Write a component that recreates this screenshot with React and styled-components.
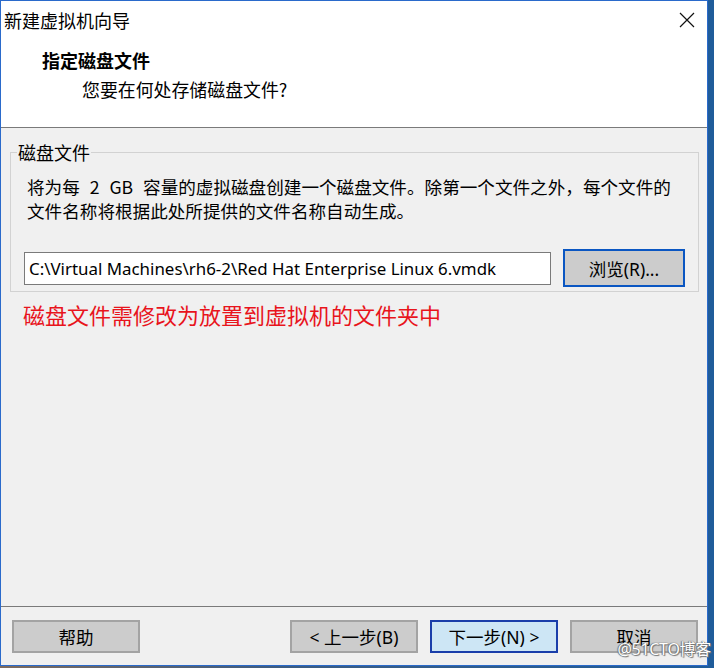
import styled, { createGlobalStyle } from 'styled-components';

const GlobalStyle = createGlobalStyle`
  html, body {
    margin: 0;
    padding: 0;
    background: #4d6584;
  }
  * {
    box-sizing: border-box;
  }
`;

const FONT = `"Noto Sans", "Noto Sans CJK SC", sans-serif`;
const CJK = `"Noto Sans CJK SC", "Noto Sans", sans-serif`;

const Page = styled.div`
  width: 714px;
  height: 668px;
  position: relative;
  background: linear-gradient(90deg, #7d6a5c 0%, #3c5c82 40%, #1f5c9a 100%);
  overflow: hidden;
`;

const Window = styled.div`
  width: 708px;
  height: 666px;
  border: 1px solid #2a6acb;
  background: #f0f0f0;
  display: flex;
  flex-direction: column;
  font-family: ${CJK};
  color: #000;
`;

const TitleBar = styled.div`
  height: 37px;
  background: #fff;
  display: flex;
  align-items: center;
  justify-content: space-between;
  padding: 0 12px 0 3px;
`;

const Title = styled.span`
  font-size: 18px;
  line-height: 24px;
`;

const Close = styled.svg`
  width: 16px;
  height: 16px;
  margin-top: 1px;
`;

const Header = styled.div`
  height: 90px;
  background: #fff;
  border-bottom: 1px solid #7a7a7a;
  padding-top: 10px;
`;

const Heading = styled.div`
  font-size: 18px;
  line-height: 24px;
  font-weight: 700;
  margin-left: 41px;
`;

const Subtitle = styled.div`
  font-size: 17.9px;
  line-height: 24px;
  margin: 5px 0 0 81px;
`;

const Body = styled.div`
  flex: 1;
  padding: 12px 8px 0 9px;
  position: relative;
`;

const Group = styled.fieldset`
  margin: 0;
  border: 1px solid #d2d2d2;
  padding: 4px 12px 4px 13px;
  min-width: 0;
`;

const Legend = styled.legend`
  font-size: 18px;
  line-height: 24px;
  padding: 0 1px;
  margin-left: -7px;
`;

const Description = styled.p`
  margin: 7px 0 0 3px;
  font-size: 17.6px;
  line-height: 24px;
  word-spacing: 6px;
`;

const PathRow = styled.div`
  display: flex;
  align-items: center;
  gap: 12px;
  margin-top: 26px;
`;

const PathInput = styled.div`
  flex: 0 0 527px;
  height: 33px;
  background: #fff;
  border: 1px solid #7a7a7a;
  display: flex;
  align-items: center;
  padding-left: 4px;
  font-family: ${FONT};
  font-size: 16.9px;
  white-space: nowrap;
  overflow: hidden;
`;

const Button = styled.button`
  width: ${(p) => p.$w || 128}px;
  height: ${(p) => p.$h || 33}px;
  background: ${(p) => (p.$primary ? '#cde6f5' : '#cccccc')};
  border: 2px solid ${(p) => (p.$focus ? '#0a56c2' : p.$primary ? '#1a3eaa' : '#a3a3a3')};
  font-family: ${FONT};
  font-size: 17.5px;
  color: #000;
  padding: 0;
  display: flex;
  align-items: center;
  justify-content: center;
`;

const Note = styled.div`
  margin: 8px 0 0 13px;
  color: #e8141c;
  font-size: 22px;
  line-height: 28px;
`;

const Footer = styled.div`
  height: 59px;
  border-top: 1px solid #7a7a7a;
  display: flex;
  align-items: flex-start;
  padding: 13px 9px 0 11px;
  gap: 12px;
`;

const Spacer = styled.div`
  flex: 1;
`;

const Watermark = styled.div`
  position: absolute;
  right: 3px;
  bottom: 8px;
  font-family: ${FONT};
  font-size: 16px;
  color: #fff;
  text-shadow: 0 0 1px #555, 1px 1px 1px #777, -1px 0 1px #777;
  letter-spacing: -0.3px;
`;

export default function App() {
  return (
    <Page>
      <GlobalStyle />
      <Window>
        <TitleBar>
          <Title>新建虚拟机向导</Title>
          <Close viewBox="0 0 16 16">
            <path d="M1 1 L15 15 M15 1 L1 15" stroke="#111" strokeWidth="1.2" fill="none" />
          </Close>
        </TitleBar>
        <Header>
          <Heading>指定磁盘文件</Heading>
          <Subtitle>您要在何处存储磁盘文件?</Subtitle>
        </Header>
        <Body>
          <Group>
            <Legend>磁盘文件</Legend>
            <Description>
              将为每 2 GB 容量的虚拟磁盘创建一个磁盘文件。除第一个文件之外，每个文件的
              <br />
              文件名称将根据此处所提供的文件名称自动生成。
            </Description>
            <PathRow>
              <PathInput>C:\Virtual Machines\rh6-2\Red Hat Enterprise Linux 6.vmdk</PathInput>
              <Button $w={122} $h={38} $focus>
                浏览(R)...
              </Button>
            </PathRow>
          </Group>
          <Note>磁盘文件需修改为放置到虚拟机的文件夹中</Note>
        </Body>
        <Footer>
          <Button>帮助</Button>
          <Spacer />
          <Button>&lt; 上一步(B)</Button>
          <Button $primary>下一步(N) &gt;</Button>
          <Button>取消</Button>
        </Footer>
      </Window>
      <Watermark>@51CTO博客</Watermark>
    </Page>
  );
}
